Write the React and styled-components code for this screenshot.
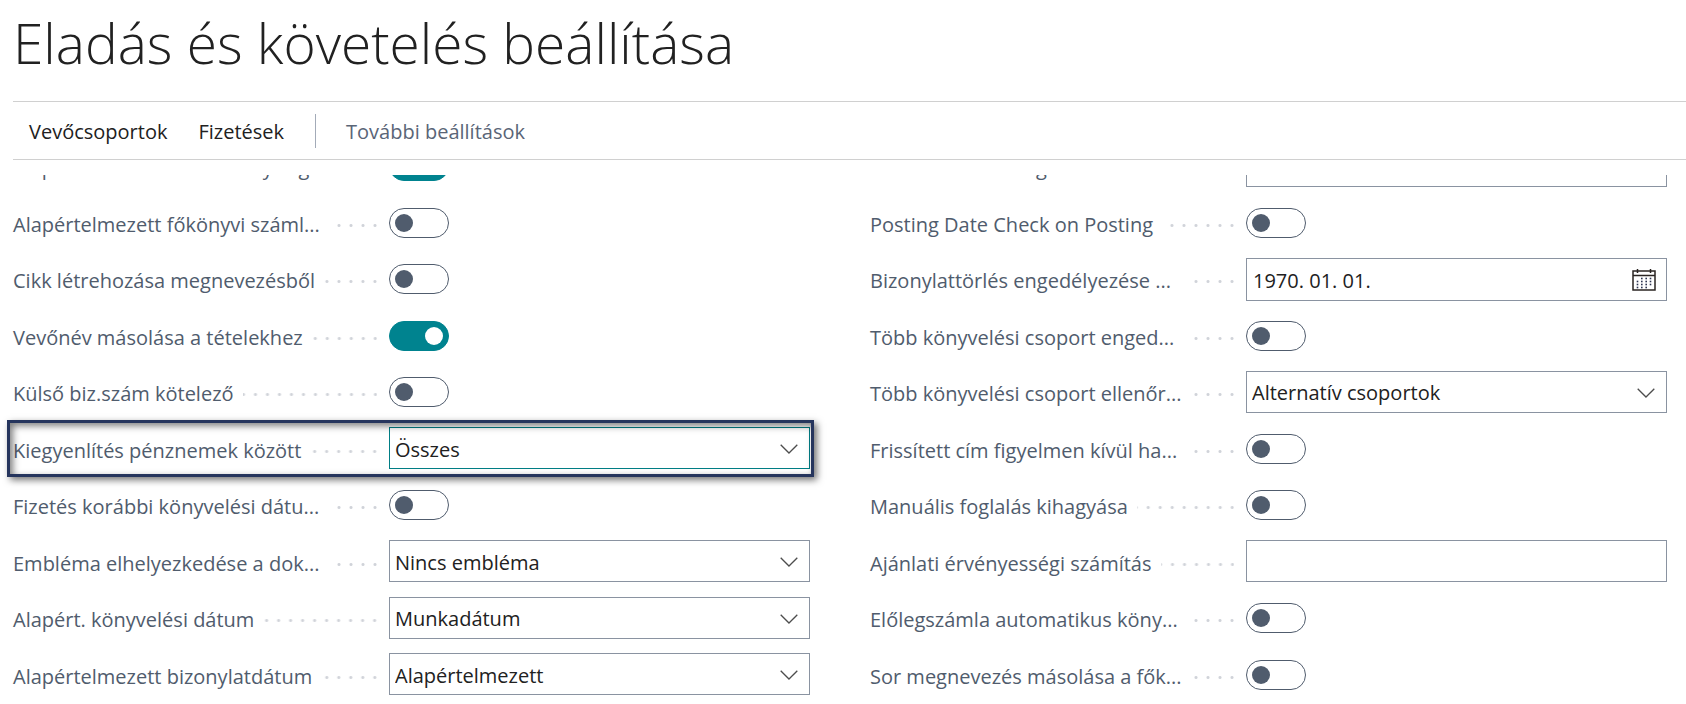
import React, { useId, useState } from "react";
import styled, { createGlobalStyle, css } from "styled-components";

const GlobalStyle = createGlobalStyle`
  *, *::before, *::after { box-sizing: border-box; }
  body {
    margin: 0;
    background: #fff;
    color: #212121;
    font-family: "Segoe UI", "Open Sans", "Noto Sans", sans-serif;
    font-size: 20px;
    line-height: 28px;
  }
`;

const Page = styled.main`
  overflow: hidden;
`;

const Title = styled.h1`
  margin: 0;
  padding: 3px 0 18px 13px;
  font-size: 55px;
  font-weight: 300;
  line-height: 80px;
  white-space: nowrap;
`;

const ActionBar = styled.nav`
  display: flex;
  align-items: center;
  height: 59px;
  margin-left: 13px;
  padding-left: 16px;
  border-top: 1px solid #d0d0d0;
  border-bottom: 1px solid #d0d0d0;
`;

const Action = styled.button`
  margin: 0 31px 0 0;
  padding: 2px 0 0;
  border: 0;
  background: none;
  color: ${(p) => (p.$muted ? "#5a6577" : "#212121")};
  font: inherit;
  white-space: nowrap;
  cursor: pointer;
`;

const Separator = styled.span`
  width: 1px;
  height: 34px;
  margin-right: 30px;
  background: #a3abb8;
`;

const Scroller = styled.div`
  margin-top: 15px;
  overflow: hidden;
`;

const Columns = styled.form`
  display: grid;
  grid-template-columns: minmax(0, 1fr) minmax(0, 1fr);
  column-gap: 60px;
  margin: -38px 19px 0 13px;
`;

const Column = styled.div`
  display: grid;
  grid-auto-rows: 57px 56px;
`;

const Row = styled.div`
  position: relative;
  display: grid;
  grid-template-columns: 364px minmax(0, 1fr);
  column-gap: 12px;
  align-items: center;

  ${(p) =>
    p.$highlighted &&
    css`
      &::after {
        content: "";
        position: absolute;
        inset: 0 -4px -1px -6px;
        border: 3px solid #26355d;
        box-shadow: 3px 3px 7px rgba(0, 0, 0, 0.55),
          inset 3px 3px 7px rgba(0, 0, 0, 0.5);
        pointer-events: none;
      }
    `}
`;

const Caption = styled.div`
  display: flex;
  align-items: center;
  gap: 9px;
  padding-top: 5px;
  color: #505c6d;

  &::after {
    content: "";
    flex: 1;
    height: 3px;
    margin-top: 1px;
    background: radial-gradient(circle at 10px 50%, #d0d3d9 1px, transparent 2px)
      right center / 12px 3px repeat-x;
  }
`;

const CaptionText = styled.label`
  flex: 0 0 ${(p) => (p.$shortened ? "312px" : "auto")};
  white-space: nowrap;
`;

const Toggle = styled.input.attrs({ type: "checkbox", role: "switch" })`
  appearance: none;
  display: flex;
  align-items: center;
  align-self: start;
  width: 60px;
  height: 30px;
  margin: 14px 0 0;
  padding: 0 5px;
  border: 1px solid #505c6d;
  border-radius: 15px;
  background: #fff;
  cursor: pointer;

  &::before {
    content: "";
    width: 18px;
    height: 18px;
    border-radius: 50%;
    background: #505c6d;
  }

  &:checked {
    justify-content: flex-end;
    border-color: #00838f;
    background: #00838f;
  }

  &:checked::before {
    background: #fff;
  }
`;

const Box = styled.div`
  display: flex;
  align-items: center;
  height: ${(p) => (p.$date ? 43 : 42)}px;
  margin-top: ${(p) => (p.$date ? 2 : 0)}px;
  padding-right: 10px;
  border: 1px solid ${(p) => (p.$active ? "#007e85" : "#8a93a1")};
  background: #fff;
`;

const TextInput = styled.input`
  flex: 1;
  min-width: 0;
  height: 100%;
  padding: 2px 6px 0;
  border: 0;
  outline: 0;
  background: none;
  color: #212121;
  font: inherit;
`;

const SelectWrap = styled.div`
  display: grid;
  grid-template-columns: minmax(0, 1fr) 18px 11px;
  align-items: center;
  height: 42px;
  border: 1px solid ${(p) => (p.$active ? "#007e85" : "#8a93a1")};
  background: #fff;

  svg {
    grid-area: 1 / 2;
    margin-top: 2px;
    pointer-events: none;
  }
`;

const Select = styled.select`
  appearance: none;
  grid-area: 1 / 1 / 2 / -1;
  height: 100%;
  padding: 3px 30px 0 5px;
  border: 0;
  outline: 0;
  background: none;
  color: #212121;
  font: inherit;
`;

const IconButton = styled.button`
  display: flex;
  padding: 0;
  border: 0;
  background: none;
  cursor: pointer;
`;

function Chevron() {
  return (
    <svg width="18" height="10" viewBox="0 0 18 10" fill="none" aria-hidden="true">
      <path d="M.7.7 9 9 17.300.7" stroke="#4d4d4d" strokeWidth="1.300" />
    </svg>
  );
}

function CalendarIcon() {
  const dots = [];
  [9.5, 12.5, 15.5, 18.5].forEach((y, row) => {
    [5.5, 9.8, 14.2, 18.5].forEach((x, col) => {
      if (row === 0 && col === 0) return;
      if (row === 3 && col === 3) return;
      dots.push(<rect key={`${row}-${col}`} x={x - 0.8} y={y - 0.8} width="1.6" height="1.6" />);
    });
  });
  return (
    <svg width="24" height="22" viewBox="0 0 24 22" fill="#2c3450" aria-hidden="true">
      <path
        d="M1 2h22v19H1zM1 6.500h22M5.500 0v4M18.500 0v4"
        fill="none"
        stroke="#2a2422"
        strokeWidth="1.500"
      />
      {dots}
    </svg>
  );
}

function Field({ label, kind = "toggle", on = false, value = "", active = false }) {
  const id = useId();
  const [checked, setChecked] = useState(on);
  const [text, setText] = useState(value);
  return (
    <Row $highlighted={active}>
      <Caption>
        <CaptionText htmlFor={id} $shortened={label.endsWith("...")}>
          {label}
        </CaptionText>
      </Caption>
      {kind === "toggle" && (
        <Toggle id={id} checked={checked} onChange={(e) => setChecked(e.target.checked)} />
      )}
      {kind === "select" && (
        <SelectWrap $active={active}>
          <Select id={id} defaultValue={value}>
            <option>{value}</option>
          </Select>
          <Chevron />
        </SelectWrap>
      )}
      {(kind === "text" || kind === "date") && (
        <Box $date={kind === "date"}>
          <TextInput id={id} value={text} onChange={(e) => setText(e.target.value)} />
          {kind === "date" && (
            <IconButton type="button" aria-label="Naptár">
              <CalendarIcon />
            </IconButton>
          )}
        </Box>
      )}
    </Row>
  );
}

const leftFields = [
  { label: "Alapértelmezett tételmennyiség", on: true },
  { label: "Alapértelmezett főkönyvi száml..." },
  { label: "Cikk létrehozása megnevezésből" },
  { label: "Vevőnév másolása a tételekhez", on: true },
  { label: "Külső biz.szám kötelező" },
  { label: "Kiegyenlítés pénznemek között", kind: "select", value: "Összes", active: true },
  { label: "Fizetés korábbi könyvelési dátu..." },
  { label: "Embléma elhelyezkedése a dok...", kind: "select", value: "Nincs embléma" },
  { label: "Alapért. könyvelési dátum", kind: "select", value: "Munkadátum" },
  { label: "Alapértelmezett bizonylatdátum", kind: "select", value: "Alapértelmezett" },
];

const rightFields = [
  { label: "Elismert különbség", kind: "text" },
  { label: "Posting Date Check on Posting" },
  { label: "Bizonylattörlés engedélyezése ...", kind: "date", value: "1970. 01. 01." },
  { label: "Több könyvelési csoport enged..." },
  { label: "Több könyvelési csoport ellenőr...", kind: "select", value: "Alternatív csoportok" },
  { label: "Frissített cím figyelmen kívül ha..." },
  { label: "Manuális foglalás kihagyása" },
  { label: "Ajánlati érvényességi számítás", kind: "text" },
  { label: "Előlegszámla automatikus köny..." },
  { label: "Sor megnevezés másolása a fők..." },
];

export default function App() {
  return (
    <Page>
      <GlobalStyle />
      <Title>Eladás és követelés beállítása</Title>
      <ActionBar>
        <Action type="button">Vevőcsoportok</Action>
        <Action type="button">Fizetések</Action>
        <Separator />
        <Action type="button" $muted>További beállítások</Action>
      </ActionBar>
      <Scroller>
        <Columns>
          <Column>
            {leftFields.map((f) => <Field key={f.label} {...f} />)}
          </Column>
          <Column>
            {rightFields.map((f) => <Field key={f.label} {...f} />)}
          </Column>
        </Columns>
      </Scroller>
    </Page>
  );
}
